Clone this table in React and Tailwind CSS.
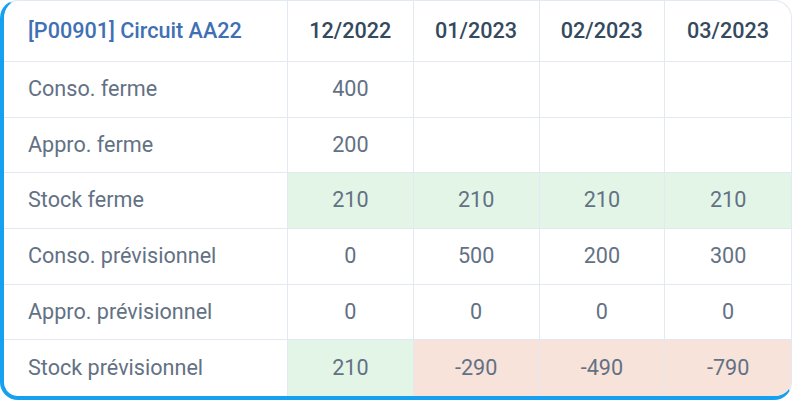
import React from "react";

const cols = ["12/2022", "01/2023", "02/2023", "03/2023"];
const rows = [
  { label: "Conso. ferme", values: ["400", "", "", ""], bg: ["", "", "", ""] },
  { label: "Appro. ferme", values: ["200", "", "", ""], bg: ["", "", "", ""] },
  { label: "Stock ferme", values: ["210", "210", "210", "210"], bg: ["g", "g", "g", "g"] },
  { label: "Conso. prévisionnel", values: ["0", "500", "200", "300"], bg: ["", "", "", ""] },
  { label: "Appro. prévisionnel", values: ["0", "0", "0", "0"], bg: ["", "", "", ""] },
  { label: "Stock prévisionnel", values: ["210", "-290", "-490", "-790"], bg: ["g", "r", "r", "r"] },
];

export default function App() {
  return (
    <div className="w-[792px] h-[400px] bg-white" style={{ fontFamily: "Roboto, 'Liberation Sans', sans-serif" }}>
      <div className="w-full h-full rounded-[18px] border-t border-r border-t-[#e3e9f1] border-r-[#e3e9f1] border-l-4 border-b-4 border-l-[#16a0f0] border-b-[#16a0f0] overflow-hidden grid grid-cols-[284px_repeat(4,1fr)] grid-rows-[61px_repeat(6,1fr)]">
        <div className="flex items-center pl-[24px] border-b border-r border-[#e3e9f1] text-[21.6px] font-medium text-[#3f70b4]">
          [P00901] Circuit AA22
        </div>
        {cols.map((c, i) => (
          <div
            key={c}
            className={`flex items-center justify-center border-b border-[#e3e9f1] text-[21.6px] font-medium text-[#34495e] ${i < 3 ? "border-r" : ""}`}
          >
            {c}
          </div>
        ))}
        {rows.map((r, ri) => (
          <React.Fragment key={r.label}>
            <div
              className={`flex items-center pl-[24px] border-r border-[#e3e9f1] text-[21.6px] text-[#637184] ${ri < 5 ? "border-b" : ""}`}
            >
              {r.label}
            </div>
            {r.values.map((v, ci) => (
              <div
                key={ci}
                className={`flex items-center justify-center border-[#e3e9f1] text-[21.6px] text-[#637184] ${ri < 5 ? "border-b" : ""} ${ci < 3 ? "border-r" : ""} ${r.bg[ci] === "g" ? "bg-[#e3f5e7]" : r.bg[ci] === "r" ? "bg-[#f8e3db]" : ""}`}
              >
                {v}
              </div>
            ))}
          </React.Fragment>
        ))}
      </div>
    </div>
  );
}
